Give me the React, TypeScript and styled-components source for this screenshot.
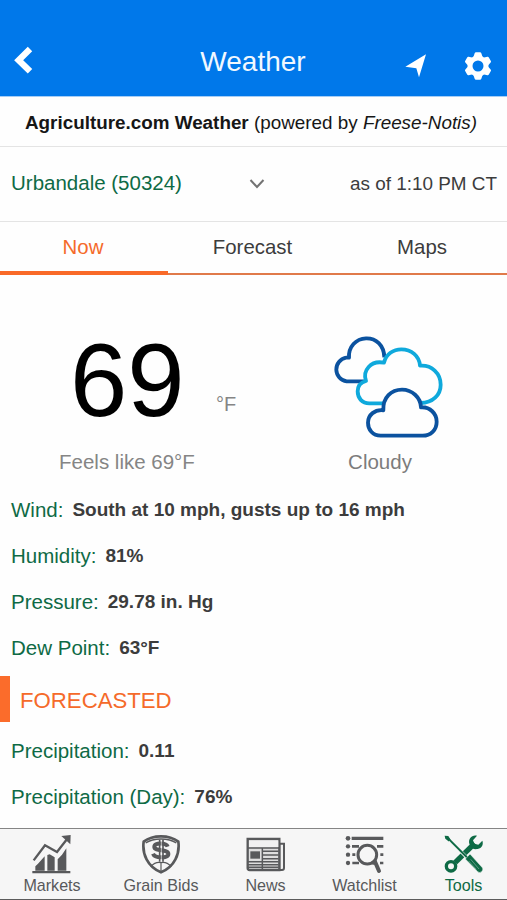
import React from 'react';
import styled, { createGlobalStyle } from 'styled-components';

const BLUE = '#0078ea';
const GREEN = '#0e6a45';
const ORANGE = '#f56a2a';
const GREY = '#58595b';

const GlobalStyle = createGlobalStyle`
  * { box-sizing: border-box; }
  body { margin: 0; background: #fefefe; font-family: "Liberation Sans", Arial, Helvetica, sans-serif; }
`;

const Screen = styled.div`
  width: 507px;
  height: 900px;
  display: flex;
  flex-direction: column;
  background: #fefefe;
  color: #3c3c3c;
  overflow: hidden;
  white-space: nowrap;
`;

const Header = styled.header`
  height: 97px;
  padding: 27px 15px 0 14px;
  display: grid;
  grid-template-columns: 92px 1fr 92px;
  align-items: center;
  background: ${BLUE};
  border-bottom: 1px solid #a5cdf6;
`;

const Title = styled.h1`
  margin: 0;
  font-size: 28px;
  font-weight: 400;
  line-height: 34px;
  text-align: center;
  color: #f1f8ff;
`;

const HeaderActions = styled.div`
  display: flex;
  justify-content: flex-end;
  align-items: center;
  gap: 38px;
  padding-top: 8px;
`;

const Drawing = styled.svg`
  display: block;
  flex: none;
`;

const BackDrawing = styled(Drawing)`
  margin-bottom: 3px;
`;

const Credit = styled.div`
  height: 50px;
  padding: 2px 5px 0 0;
  line-height: 48px;
  text-align: center;
  font-size: 18.85px;
  color: #161616;
  border-bottom: 1px solid #e4e4e4;
`;

const LocationBar = styled.div`
  height: 75px;
  padding: 0 10px 0 11px;
  display: flex;
  align-items: center;
  border-bottom: 1px solid #e4e4e4;
`;

const Place = styled.button`
  flex: 0 0 254px;
  display: flex;
  justify-content: space-between;
  align-items: center;
  padding: 0;
  border: 0;
  background: none;
  font: 20.5px/24px "Liberation Sans", Arial, sans-serif;
  color: ${GREEN};

  span { padding-bottom: 2px; }
`;

const Updated = styled.span`
  margin-left: auto;
  font-size: 18.9px;
`;

const Tabs = styled.nav`
  height: 53px;
  display: grid;
  grid-template-columns: 168px 169px 170px;
`;

const Tab = styled.a<{ $active?: boolean }>`
  height: 53px;
  padding-right: ${p => (p.$active ? 2 : 0)}px;
  line-height: 51px;
  font-size: 20.4px;
  text-align: center;
  color: ${p => (p.$active ? ORANGE : '#3c3c3c')};
  border-bottom: ${p => (p.$active ? '4px solid #f96a28' : '2px solid #e07a4a')};
`;

const Current = styled.section`
  height: 212px;
  display: grid;
  grid-template-columns: 254px 253px;
`;

const Temperature = styled.div`
  padding: 50px 0 0 69px;
`;

const Reading = styled.div`
  display: flex;
  height: 112px;
`;

const Degrees = styled.span`
  width: 147px;
  font-size: 103px;
  line-height: 112px;
  text-indent: 1px;
  color: #000;
`;

const Unit = styled.span`
  padding-top: 67px;
  font-size: 20px;
  line-height: 24px;
  color: #858585;
`;

const FeelsLike = styled.div`
  margin: 13px 0 0 -10px;
  line-height: 24px;
  font-size: 20.5px;
  color: #858585;
`;

const Condition = styled.div`
  display: flex;
  flex-direction: column;
  align-items: center;
  padding-top: 59px;
  padding-right: 1px;
  line-height: 24px;
  font-size: 20.5px;
  color: #7c7c7c;

  svg { margin: 0 -15px 0 0; }
  span { margin-top: 9px; }
`;

const Details = styled.dl`
  margin: 0;
  padding-left: 11px;
`;

const Detail = styled.div`
  display: flex;
  align-items: center;
  height: 45.9px;
  line-height: 24px;
`;

const Term = styled.dt`
  font-size: 20.5px;
  color: ${GREEN};
`;

const Value = styled.dd`
  margin: 0 0 0 9px;
  font-size: 19px;
  font-weight: 700;
`;

const SectionHeading = styled.h2`
  height: 46px;
  margin: 5.4px 0 6px;
  padding-left: 10px;
  border-left: 10.5px solid #fb6c2b;
  font-size: 22.2px;
  font-weight: 400;
  line-height: 49px;
  color: ${ORANGE};
`;

const TabBar = styled.footer`
  height: 72px;
  margin-top: auto;
  padding: 5px 0 0 4px;
  display: grid;
  grid-template-columns: 96px 122px 87px 111px 87px;
  background: #f6f6f6;
  border-top: 1px solid #858585;
  border-bottom: 1px solid #5c5c5c;
`;

const TabItem = styled.a<{ $active?: boolean }>`
  display: flex;
  flex-direction: column;
  align-items: center;
  gap: 1px;
  font-size: 16.1px;
  line-height: 20px;
  color: ${p => (p.$active ? GREEN : GREY)};
`;

const BackIcon = () => (
  <BackDrawing width="20" height="28" viewBox="42 48 60 84">
    <path d="M90 57L56 90.500L90 124" fill="none" stroke="#fff" strokeWidth="19" />
  </BackDrawing>
);

const LocateIcon = () => (
  <Drawing width="21" height="24" viewBox="457 68 63 72">
    <path d="M458 106L520 69L499 138L491 111Z" fill="#fff" />
  </Drawing>
);

const GearIcon = () => (
  <Drawing width="28" height="28" viewBox="-42 -42 84 84">
    <circle r="24" fill="none" stroke="#fff" strokeWidth="15" />
    {[0, 60, 120, 180, 240, 300].map(angle => (
      <path key={angle} d="M-14 -26L-10 -38Q-9 -41 -6 -41H6Q9 -41 10 -38L14 -26Z" fill="#fff" transform={`rotate(${angle})`} />
    ))}
  </Drawing>
);

const DownIcon = () => (
  <Drawing width="16" height="10" viewBox="0 0 16 10">
    <path d="M1.500 1L8 8L14.500 1" fill="none" stroke="#737373" strokeWidth="2" />
  </Drawing>
);

const CloudsIcon = () => (
  <Drawing width="112" height="107" viewBox="66 42 336 321">
    <g fill="#fefefe" strokeWidth="11.500" strokeLinejoin="round">
      <path stroke="#0b529f" d="M164 184H110A36 36 0 0 1 108 113Q112 112 117 113C115 80 138 56 168 55C198 54 222 76 223 112" />
      <path stroke="#0fa9dc" d="M222 250H178C156 250 143 234 143 214C143 198 153 187 168 183C157 152 182 120 222 128C228 102 250 88 274 88C304 88 328 108 330 137C365 134 392 160 392 194C392 225 368 249 332 249" />
      <path stroke="#0b529f" d="M212 347C188 347 174 329 174 308C174 284 195 268 220 271C218 232 244 209 276 209C306 209 332 232 333 262C360 260 380 281 380 305C380 330 362 347 338 347Z" />
    </g>
  </Drawing>
);

const MarketsIcon = () => (
  <Drawing width="40" height="40" viewBox="99 41 120 120">
    <g fill="currentColor">
      <path d="M100 152H214V159H100ZM109 151V138L117 130L137 108V151ZM145 151V104L152 102L167 111V151ZM176 151V117L189 103L202 84V151Z" />
      <path d="M187 47L215 44L214 72Z" />
    </g>
    <path d="M104 120L138 75L174 95L206 54" fill="none" stroke="currentColor" strokeWidth="7" />
  </Drawing>
);

const GrainIcon = () => (
  <Drawing width="40" height="40" viewBox="424 41 120 120">
    <path d="M484 48C466 48 445 54 432 64C427 100 443 139 484 156C525 139 541 100 536 64C523 54 502 48 484 48Z" fill="none" stroke="currentColor" strokeWidth="8" />
    <path d="M438 68C450 60 466 56 484 56C502 56 518 60 530 68" fill="none" stroke="currentColor" strokeWidth="4" />
    <path d="M453 139Q468 123 484 127Q500 123 515 139M484 126V153" fill="none" stroke="currentColor" strokeWidth="3.500" />
    <path d="M504 79C500 67 463 65 464 80C465 94 506 86 506 101C506 116 465 113 460 100" fill="none" stroke="currentColor" strokeWidth="12" />
    <path d="M480 58V124M490 58V124" stroke="currentColor" strokeWidth="5" />
    <path d="M485 60V122" stroke="#f6f6f6" strokeWidth="2" />
  </Drawing>
);

const NewsIcon = () => (
  <Drawing width="40" height="40" viewBox="138 41 120 120">
    <path d="M238 70H252V143Q252 149 246 149H238Z" fill="#f1f1f1" stroke="currentColor" strokeWidth="6" />
    <path d="M143 56H238V149H149Q143 149 143 143Z" fill="#dedede" stroke="currentColor" strokeWidth="7" />
    <path d="M147 60H235V80H147Z" fill="#f1f1f1" />
    <path d="M143 83H238M187 83V149M187 93H236M187 104H236M187 115H236M143 124H236M143 133H236M143 141H236" stroke="currentColor" strokeWidth="4.500" />
    <path d="M151 93H180V115H151Z" fill="currentColor" />
  </Drawing>
);

const WatchIcon = () => (
  <Drawing width="40" height="40" viewBox="435 41 120 120">
    <g fill="currentColor">
      <circle cx="444" cy="54" r="7" /><circle cx="444" cy="78" r="6.500" />
      <circle cx="444" cy="103" r="6.500" /><circle cx="444" cy="128" r="6.500" />
    </g>
    <path d="M455 54H550" stroke="currentColor" strokeWidth="10" />
    <path d="M456 78H477M531 78H550M457 103H466M541 103H550M457 128H477M540 128H550" stroke="currentColor" strokeWidth="8" />
    <circle cx="502" cy="103" r="28" fill="none" stroke="currentColor" strokeWidth="9" />
    <path d="M520 127L525 124L537 152" fill="none" stroke="currentColor" strokeWidth="12" strokeLinecap="round" />
  </Drawing>
);

const ToolsIcon = () => (
  <Drawing width="40" height="40" viewBox="134 41 120 120">
    <path d="M168 126L226 69" stroke="currentColor" strokeWidth="16" />
    <circle cx="155" cy="138" r="14" fill="none" stroke="currentColor" strokeWidth="10" />
    <path d="M233 46C218 42 206 55 210 70C215 84 224 88 235 86C248 83 253 72 249 61L237 73L225 70L221 60Z" fill="currentColor" />
    <path d="M136 46L147 47L155 60L150 65L138 55Z" fill="currentColor" />
    <path d="M151 60L208 117" stroke="#f6f6f6" strokeWidth="10" />
    <path d="M147 55L208 116" stroke="currentColor" strokeWidth="6" />
    <path d="M198 116L212 101L250 143Q252 149 247 154Q241 159 235 154Z" fill="currentColor" stroke="#f6f6f6" strokeWidth="1.500" />
    <path d="M214 117L239 146M208 122L231 147" stroke="#a9cbbd" strokeWidth="1.500" />
  </Drawing>
);

const current = [
  ['Wind:', 'South at 10 mph, gusts up to 16 mph'],
  ['Humidity:', '81%'],
  ['Pressure:', '29.78 in. Hg'],
  ['Dew Point:', '63°F'],
];

const forecasted = [
  ['Precipitation:', '0.11'],
  ['Precipitation (Day):', '76%'],
];

const DetailList = ({ rows }: { rows: string[][] }) => (
  <Details>
    {rows.map(([term, value]) => (
      <Detail key={term}>
        <Term>{term}</Term>
        <Value>{value}</Value>
      </Detail>
    ))}
  </Details>
);

export default function App() {
  return (
    <>
      <GlobalStyle />
      <Screen>
        <Header>
          <BackIcon />
          <Title>Weather</Title>
          <HeaderActions>
            <LocateIcon />
            <GearIcon />
          </HeaderActions>
        </Header>
        <Credit>
          <b>Agriculture.com Weather</b> (powered by <i>Freese-Notis)</i>
        </Credit>
        <LocationBar>
          <Place>
            <span>Urbandale (50324)</span>
            <DownIcon />
          </Place>
          <Updated>as of 1:10 PM CT</Updated>
        </LocationBar>
        <Tabs>
          <Tab $active>Now</Tab>
          <Tab>Forecast</Tab>
          <Tab>Maps</Tab>
        </Tabs>
        <Current>
          <Temperature>
            <Reading>
              <Degrees>69</Degrees>
              <Unit>°F</Unit>
            </Reading>
            <FeelsLike>Feels like 69°F</FeelsLike>
          </Temperature>
          <Condition>
            <CloudsIcon />
            <span>Cloudy</span>
          </Condition>
        </Current>
        <DetailList rows={current} />
        <SectionHeading>FORECASTED</SectionHeading>
        <DetailList rows={forecasted} />
        <TabBar>
          <TabItem><MarketsIcon />Markets</TabItem>
          <TabItem><GrainIcon />Grain Bids</TabItem>
          <TabItem><NewsIcon />News</TabItem>
          <TabItem><WatchIcon />Watchlist</TabItem>
          <TabItem $active><ToolsIcon />Tools</TabItem>
        </TabBar>
      </Screen>
    </>
  );
}
